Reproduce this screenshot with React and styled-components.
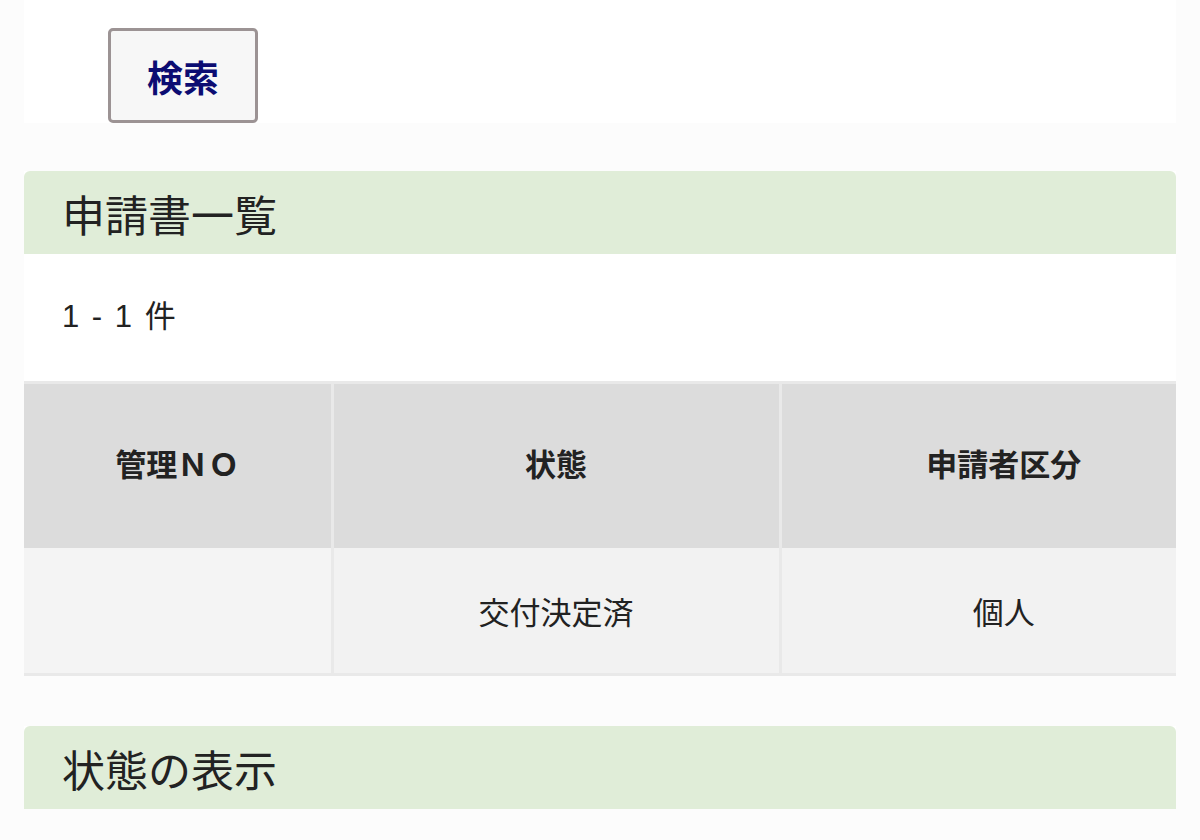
import React from 'react';
import styled, { createGlobalStyle } from 'styled-components';

const GlobalStyle = createGlobalStyle`
  html, body {
    margin: 0;
    padding: 0;
    background: #fcfcfc;
    font-family: 'Liberation Sans', 'Noto Sans CJK JP', sans-serif;
    color: #222;
  }
`;

const Page = styled.div`
  width: 1200px;
  height: 840px;
  overflow: hidden;
  padding: 0 24px;
  box-sizing: border-box;
`;

const SearchArea = styled.div`
  background: #fff;
  padding: 28px 0 0 84px;
  height: 123px;
  box-sizing: border-box;
`;

const SearchButton = styled.button`
  width: 150px;
  height: 95px;
  border: 3px solid #9c9394;
  border-radius: 5px;
  background: #f7f7f7;
  color: #0c0c72;
  font-family: 'Noto Sans CJK JP', sans-serif;
  font-weight: 700;
  font-size: 36px;
  padding: 0;
  cursor: pointer;
`;

const Section = styled.section`
  margin-top: ${(p) => p.$top}px;
  background: #fff;
`;

const SectionTitle = styled.h2`
  margin: 0;
  height: 83px;
  display: flex;
  align-items: center;
  padding-left: 38px;
  background: #e0edd8;
  border-radius: 6px 6px 0 0;
  font-family: 'Noto Sans CJK JP', sans-serif;
  font-size: 43px;
  font-weight: 400;
  color: #222;
`;

const Count = styled.p`
  margin: 0;
  padding: 41px 0 0 38px;
  height: 127px;
  box-sizing: border-box;
  font-size: 31px;
  letter-spacing: 2px;
  line-height: 44px;
  color: #222;
`;

const Table = styled.table`
  width: 100%;
  border-collapse: collapse;
  table-layout: fixed;
`;

const HeadCell = styled.th`
  height: 156px;
  background: #dcdcdc;
  border: 3px solid #e9e9e9;
  border-bottom: none;
  font-size: 31px;
  font-weight: 700;
  color: #222;
  text-align: center;
  padding: 0 0 8px ${(p) => p.$shift || 0}px;
  &:first-child { border-left: none; }
  &:last-child { border-right: none; }
`;

const BodyCell = styled.td`
  height: 125px;
  background: #f2f2f2;
  border: 3px solid #e9e9e9;
  border-top: none;
  font-size: 31px;
  font-weight: 400;
  color: #222;
  text-align: center;
  padding: 0 0 0 ${(p) => p.$shift || 0}px;
  &:first-child { border-left: none; background: #f4f4f4; }
  &:last-child { border-right: none; }
`;

export default function App() {
  return (
    <>
      <GlobalStyle />
      <Page>
        <SearchArea>
          <SearchButton>検索</SearchButton>
        </SearchArea>
        <Section $top={48}>
          <SectionTitle>申請書一覧</SectionTitle>
          <Count>1 - 1 件</Count>
          <Table>
            <colgroup>
              <col style={{ width: 308 }} />
              <col style={{ width: 448 }} />
              <col />
            </colgroup>
            <thead>
              <tr>
                <HeadCell>管理ＮＯ</HeadCell>
                <HeadCell>状態</HeadCell>
                <HeadCell $shift={50}>申請者区分</HeadCell>
              </tr>
            </thead>
            <tbody>
              <tr>
                <BodyCell></BodyCell>
                <BodyCell>交付決定済</BodyCell>
                <BodyCell $shift={50}>個人</BodyCell>
              </tr>
            </tbody>
          </Table>
        </Section>
        <Section $top={50}>
          <SectionTitle>状態の表示</SectionTitle>
        </Section>
      </Page>
    </>
  );
}
